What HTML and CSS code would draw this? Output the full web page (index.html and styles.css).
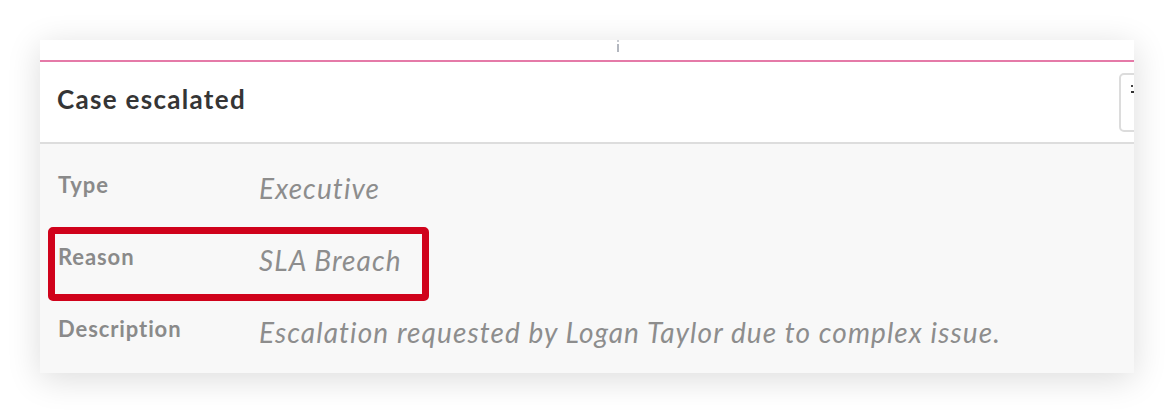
FILE: index.html
```html
<!DOCTYPE html>
<html lang="en">
<head>
<meta charset="utf-8">
<title>Case escalated</title>
<link rel="stylesheet" href="styles.css">
</head>
<body>
<div class="card">
  <div class="strip"><span class="handle"><i class="dot"></i><i class="bar"></i></span></div>
  <div class="accent"></div>
  <div class="header">
    <h1 class="title">Case escalated</h1>
    <div class="btn">
      <svg class="btn-icon" width="14" height="14" viewBox="0 0 14 14"><rect x="0" y="0" width="2" height="2" fill="#444"/><rect x="0" y="6" width="6" height="2" fill="#333"/></svg>
    </div>
  </div>
  <div class="divider"></div>
  <div class="details">
    <div class="row"><div class="label">Type</div><div class="value">Executive</div></div>
    <div class="row"><div class="label">Reason</div><div class="value">SLA Breach</div></div>
    <div class="row"><div class="label">Description</div><div class="value">Escalation requested by Logan Taylor due to complex issue.</div></div>
  </div>
  <div class="highlight"></div>
</div>
</body>
</html>
```

FILE: styles.css
```css
* { box-sizing: border-box; }
html, body { margin: 0; padding: 0; background: #ffffff; }
body {
  width: 1174px;
  height: 414px;
  overflow: hidden;
  font-family: "Lato", "Open Sans", sans-serif;
  padding: 40px 0 0 40px;
}
.card {
  position: relative;
  width: 1094px;
  height: 333px;
  background: #ffffff;
  box-shadow: 0 6px 32px rgba(0, 0, 0, 0.14);
  overflow: hidden;
  display: flex;
  flex-direction: column;
}
.strip {
  height: 20px;
  display: flex;
  justify-content: center;
  background: #ffffff;
}
.handle {
  display: flex;
  flex-direction: column;
  align-items: center;
  gap: 2px;
  margin-left: 61px;
}
.handle .dot { display: block; width: 2px; height: 2px; background: #c8cbd1; }
.handle .bar { display: block; width: 2px; height: 8px; background: #b3b7bf; }
.accent { height: 2px; background: #e57aa8; }
.header {
  height: 80px;
  display: flex;
  align-items: center;
  justify-content: space-between;
  padding-left: 17px;
}
.title {
  margin: 0;
  padding-bottom: 7px;
  font-size: 26px;
  font-weight: 700;
  color: #353535;
  letter-spacing: 1.3px;
}
.btn {
  width: 50px;
  height: 59px;
  margin-right: -35px;
  border: 2px solid #dcdcdc;
  border-radius: 5px;
  background: #fff;
  padding: 10px 0 0 10px;
}
.btn-icon { display: block; }
.divider { height: 2px; background: #dddddd; }
.details {
  flex: 1;
  background: #f8f8f8;
  padding: 26px 0 0 18px;
  display: flex;
  flex-direction: column;
  gap: 36px;
}
.row {
  display: flex;
  align-items: flex-start;
  height: 36px;
}
.label {
  width: 201px;
  flex: none;
  font-size: 22px;
  line-height: 30px;
  font-weight: 700;
  color: #8a8a8a;
  letter-spacing: 0.9px;
}
.value {
  font-size: 28px;
  line-height: 36px;
  font-style: italic;
  font-weight: 400;
  color: #8d8d8d;
  letter-spacing: 1.1px;
  white-space: nowrap;
}
.highlight {
  position: absolute;
  left: 8px;
  top: 187px;
  width: 381px;
  height: 74px;
  border: 7px solid #d0021b;
  border-radius: 5px;
}
```
